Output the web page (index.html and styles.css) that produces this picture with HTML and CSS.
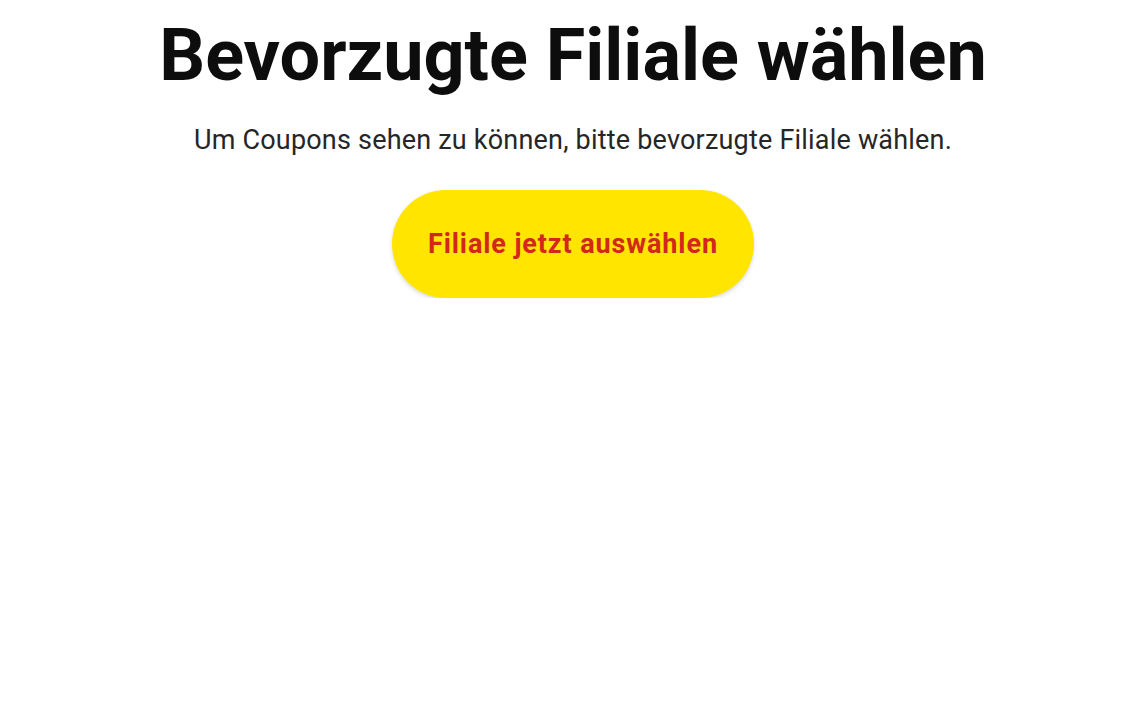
FILE: index.html
```html
<!DOCTYPE html>
<html>
<head>
    <meta charset="UTF-8" />
    <meta name="viewport" content="width=device-width, initial-scale=1.0" />
    <title>Filiale wählen</title>
    <link rel="stylesheet" href="styles.css">
</head>
<body>
    <div class="store-select">
        <h1 class="title">Bevorzugte Filiale wählen</h1>
        <p class="hint">Um Coupons sehen zu können, bitte bevorzugte Filiale wählen.</p>
        <a href="javascript:;" class="btn-select">Filiale jetzt auswählen</a>
    </div>
</body>
</html>
```
FILE: styles.css
```css
body {
    margin: 0;
    background: #fff;
    font-family: Roboto, "Liberation Sans", sans-serif;
}

.store-select {
    display: flex;
    flex-direction: column;
    align-items: center;
    padding-top: 14px;
}

.title {
    margin: 0;
    font-size: 72px;
    font-weight: 700;
    line-height: 84px;
    color: #0d0d0d;
}

.hint {
    margin: 26px 0 0;
    font-size: 27px;
    line-height: 32px;
    letter-spacing: 0.2px;
    color: #262626;
}

.btn-select {
    display: flex;
    align-items: center;
    justify-content: center;
    margin-top: 34px;
    width: 362px;
    height: 108px;
    border-radius: 54px;
    background: #ffe500;
    box-shadow: 0 2px 4px rgba(0, 0, 0, 0.15);
    font-size: 27px;
    font-weight: 700;
    letter-spacing: 0.9px;
    color: #d2281a;
    text-decoration: none;
}
```
